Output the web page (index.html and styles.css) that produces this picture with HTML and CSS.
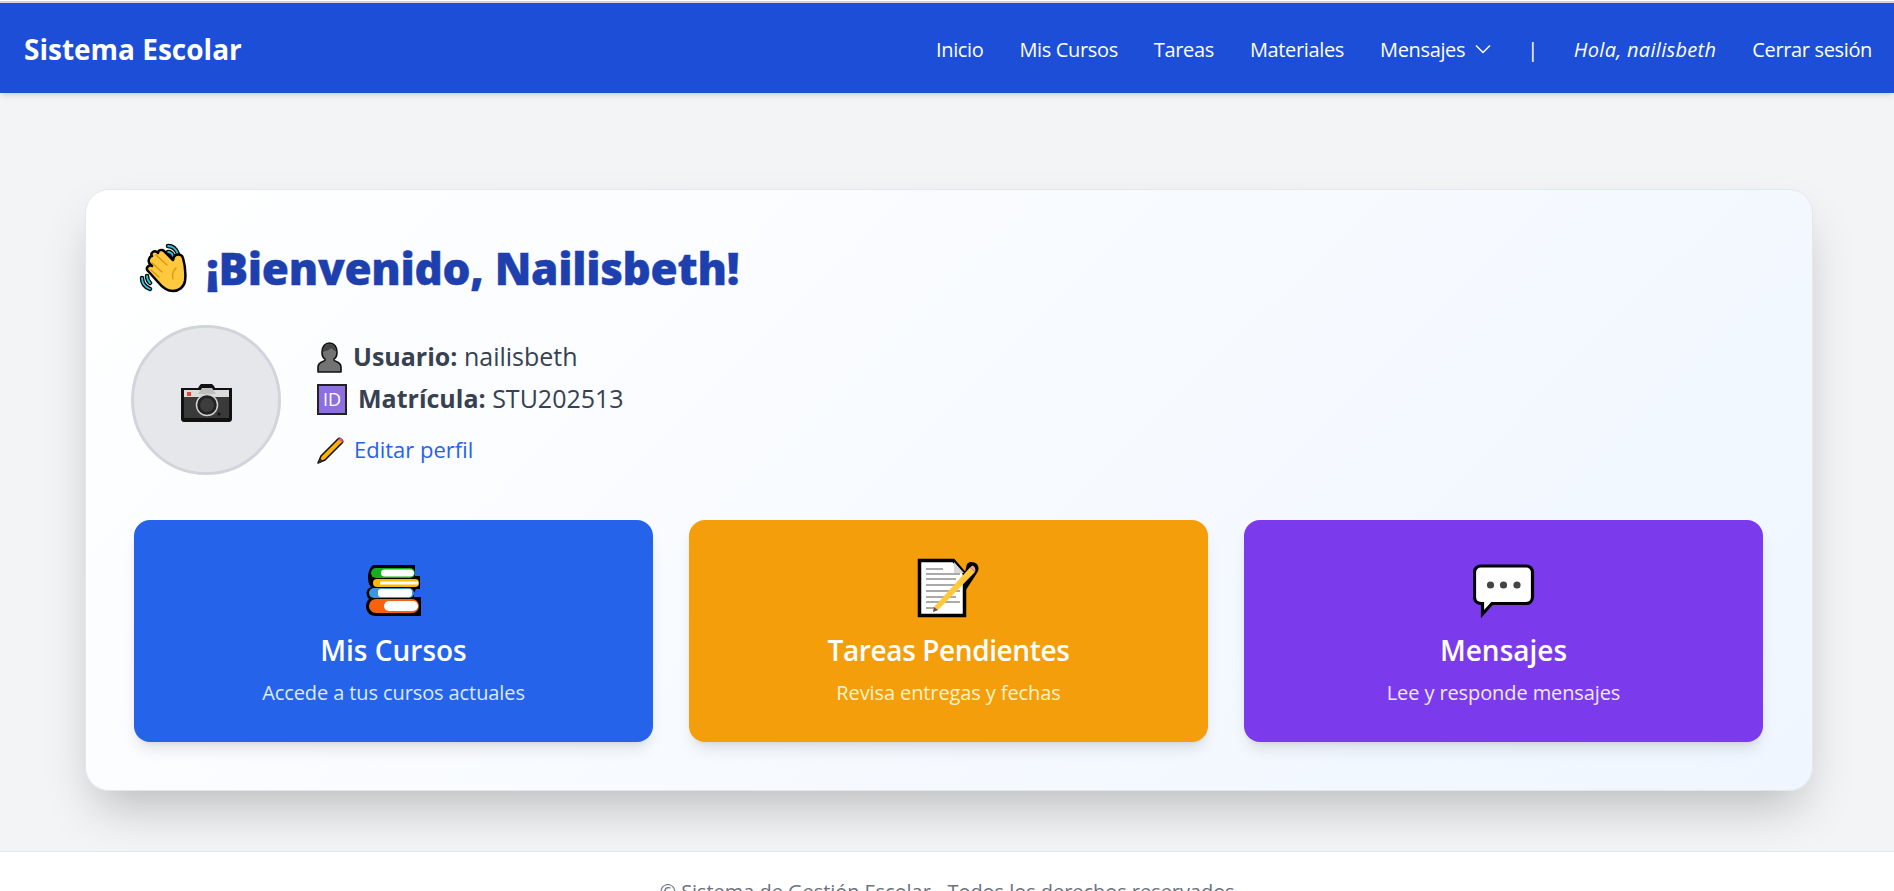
FILE: index.html
```html
<!DOCTYPE html>
<html lang="es">
<head>
    <meta charset="UTF-8">
    <meta name="viewport" content="width=device-width, initial-scale=1.0">
    <title>Sistema Escolar</title>
    <link rel="stylesheet" href="styles.css">
</head>
<body>
    <div class="topline"></div>
    <nav class="navbar">
        <a class="brand" href="#">Sistema Escolar</a>
        <div class="nav-links">
            <a href="#">Inicio</a>
            <a href="#">Mis Cursos</a>
            <a href="#">Tareas</a>
            <a href="#">Materiales</a>
            <a href="#" class="dropdown">Mensajes
                <svg class="chevron" viewBox="0 0 16 10"><path d="M1 1.500 8 8.500l7-7" fill="none" stroke="#fff" stroke-width="1.500"/></svg>
            </a>
            <span class="sep">|</span>
            <em>Hola, nailisbeth</em>
            <a href="#">Cerrar sesión</a>
        </div>
    </nav>

    <main class="main">
        <section class="card">
            <h1 class="welcome">
                <svg class="ico-wave" viewBox="0 0 48 50">
                    <path d="M29 3c5 0 8 3 10 8M29 9c2 0 4 1 5 4M3 35c0 5 3 9 8 11M8 33c0 3 1 5 3 7" fill="none" stroke="#000" stroke-width="4.500" stroke-linecap="round"/>
                    <path d="M29 3c5 0 8 3 10 8M29 9c2 0 4 1 5 4M3 35c0 5 3 9 8 11M8 33c0 3 1 5 3 7" fill="none" stroke="#29c3e0" stroke-width="1.800" stroke-linecap="round"/>
                    <path d="M13 13c-2-3 2-6 5-4l1 1c0-3 4-4 6-2l9 9 1-3c2-4 8-3 9 1 2 7 3 15 2 23-1 6-6 10-12 10-7 0-11-4-15-9L9 28c-3-3 1-7 4-5l-2-2c-3-3 0-8 2-8z" fill="#ffc83d" stroke="#000" stroke-width="2.500" stroke-linejoin="round"/>
                    <path d="M17 12l11 10M13 20l10 9M12 27l8 7M37 25c-3 3-4 7-3 11" fill="none" stroke="#d9950f" stroke-width="1.200" stroke-linecap="round"/>
                </svg>
                ¡Bienvenido, Nailisbeth!
            </h1>

            <div class="profile">
                <div class="avatar">
                    <svg class="ico-camera" viewBox="0 0 51 38">
                        <path d="M0 4h17l2-3 1-1h11l2 2 1 2h17v31c0 1-1 3-3 3H3c-2 0-3-2-3-3z" fill="#111"/>
                        <rect x="3" y="6" width="45" height="7" fill="#dcdcdc"/>
                        <path d="M3 13h45v21H3z" fill="#3a3a3a"/>
                        <rect x="6" y="8" width="4" height="4" fill="#e8452c"/>
                        <path d="M17 10l4-6h10l4 6z" fill="#bdbdbd"/>
                        <circle cx="26" cy="21" r="10.500" fill="#222" stroke="#d0d0d0" stroke-width="1.500"/>
                        <circle cx="26" cy="21" r="7" fill="#3d3d3d"/>
                        <circle cx="38" cy="30" r="1.500" fill="#111"/>
                    </svg>
                </div>
                <div class="profile-info">
                    <p class="info-line">
                        <svg class="ico-person" viewBox="0 0 25 31">
                            <path d="M1 30v-5c0-3 3-5 6-6 1 0 1-1 1-2-2-1-3-4-3-7 0-5 3-9 7.500-9S20 5 20 10c0 3-1 6-3 7 0 1 0 2 1 2 3 1 6 3 6 6v5z" fill="#737373" stroke="#111" stroke-width="1.600" stroke-linejoin="round"/>
                            <path d="M5.500 10c1-4 3-8 7-8s6 4 7 8c-2-1-4-3-5-4-2 2-6 3-9 4z" fill="#444"/>
                        </svg>
                        <span class="info-text"><b>Usuario:</b> nailisbeth</span>
                    </p>
                    <p class="info-line">
                        <span class="id-badge">ID</span>
                        <span class="info-text"><b>Matrícula:</b> STU202513</span>
                    </p>
                    <a class="edit-link" href="#">
                        <svg class="ico-pencil" viewBox="0 0 27 27">
                            <path d="M21 2 4 19l-3 7 7-3L25 6c1-1 1-2 0-3l-1-1c-1-1-2-1-3 0z" fill="#ffb300" stroke="#111" stroke-width="1.600" stroke-linejoin="round"/>
                            <path d="M21 2l4 4 1-2-2-3z" fill="#f0606f"/>
                            <path d="M1 26l2-5 3 3z" fill="#333"/>
                        </svg>
                        <span class="info-text">Editar perfil</span>
                    </a>
                </div>
            </div>

            <div class="tiles">
                <a class="tile tile-blue" href="#">
                    <svg class="ico-books" viewBox="0 0 55 52">
                        <path d="M8 1h41v11h5v13h-4l-2 4v4h7v19H10C4 52 0 48 0 42c0-3 1-5 3-7-3-3-3-8-1-10l3-2C3 21 2 18 2 13S5 1 8 1z" fill="#000"/>
                        <rect x="5" y="4" width="44" height="10" rx="5" fill="#16b01e"/>
                        <rect x="15" y="5.500" width="33" height="7" rx="3.500" fill="#fff"/>
                        <rect x="7" y="15" width="46" height="8" rx="4" fill="#ffb900"/>
                        <rect x="14" y="17.500" width="38" height="3" fill="#fff"/>
                        <rect x="3" y="24" width="45" height="10" rx="5" fill="#3b96dc"/>
                        <rect x="12" y="25" width="34" height="8" rx="3" fill="#fff"/>
                        <rect x="3" y="35" width="50" height="14" rx="7" fill="#f7630c"/>
                        <rect x="18" y="37" width="34" height="10" rx="5" fill="#fff"/>
                    </svg>
                    <h2>Mis Cursos</h2>
                    <p>Accede a tus cursos actuales</p>
                </a>
                <a class="tile tile-orange" href="#">
                    <svg class="ico-memo" viewBox="0 0 63 61">
                        <path d="M2.500 2.500h34l11 13v42h-45z" fill="#fff" stroke="#000" stroke-width="3.500"/>
                        <path d="M37 4v11h10z" fill="#d8d8d8"/>
                        <path d="M9 11h17M9 16h34M9 21h30M9 27h34M9 33h34M9 39h30M9 44h34M9 50h8" stroke="#aaa" stroke-width="1.800"/>
                        <path d="M50 6c3-3 7-2 10 0 2 3 2 6 0 9L47 35V18z" fill="#000"/>
                        <path d="M53 9.500 17 49l-1 5 5-2L58 14z" fill="#ffc83d"/>
                        <path d="M53 9.500c2-2 3-2 4-1s2 3 1 5.500z" fill="#eda0a8"/>
                        <path d="M16 54l1-5 4 3z" fill="#555"/>
                    </svg>
                    <h2>Tareas Pendientes</h2>
                    <p>Revisa entregas y fechas</p>
                </a>
                <a class="tile tile-purple" href="#">
                    <svg class="ico-bubble" viewBox="0 0 62 55">
                        <path d="M8 2h45c4 0 6.500 3 6.500 6v25c0 4-3 6.500-6.500 6.500H19L9.500 50V39.500H8c-4 0-6.500-3-6.500-6.500V8C1.500 5 4 2 8 2z" fill="#fff" stroke="#000" stroke-width="3.200"/>
                        <circle cx="17.500" cy="21" r="3.600" fill="#444"/>
                        <circle cx="30.500" cy="21" r="3.600" fill="#444"/>
                        <circle cx="44" cy="21" r="3.600" fill="#444"/>
                    </svg>
                    <h2>Mensajes</h2>
                    <p>Lee y responde mensajes</p>
                </a>
            </div>
        </section>
    </main>

    <footer class="footer">© Sistema de Gestión Escolar - Todos los derechos reservados</footer>
</body>
</html>
```

FILE: styles.css
```css
html {
    background: white;
    height: 891px;
    overflow: hidden;
}
body {
    margin: 1px 0 0;
    font-family: "Open Sans", "Noto Sans", sans-serif;
    background-color: #f3f4f6;
    color: #374151;
}
a { text-decoration: none; color: inherit; }

.topline { height: 2px; background: #d4d4d4; }

.navbar {
    height: 90px;
    box-sizing: border-box;
    padding: 2px 22px 0 24px;
    background: #1d4ed8;
    color: white;
    display: flex;
    align-items: center;
    justify-content: space-between;
    box-shadow: 0 4px 6px -1px rgba(0,0,0,0.1), 0 2px 4px -2px rgba(0,0,0,0.1);
    font-size: 20px;
}
.brand { font-size: 28px; font-weight: 700; }
.nav-links { display: flex; align-items: center; gap: 36px; letter-spacing: -0.35px; }
.nav-links em { letter-spacing: 0.3px; }
.dropdown { display: flex; align-items: center; gap: 10px; }
.chevron { width: 16px; height: 10px; }

.main { padding: 96px 0 60px 85px; }
.card {
    width: 1728px;
    box-sizing: border-box;
    border: 1px solid #e5e7eb;
    border-radius: 24px;
    padding: 48px;
    background: linear-gradient(135deg, #ffffff, #eff6ff);
    box-shadow: 0 25px 50px -12px rgba(0,0,0,0.25);
}
.welcome {
    margin: 0 0 27px 5px;
    display: flex;
    align-items: center;
    gap: 19px;
    font-size: 44px;
    font-weight: 800;
    letter-spacing: -0.3px;
    -webkit-text-stroke: 0.4px #1e40af;
    color: #1e40af;
    line-height: 60px;
}
.ico-wave { width: 48px; height: 50px; }

.profile { display: flex; align-items: center; gap: 36px; margin-left: -3px; }
.avatar {
    width: 150px;
    height: 150px;
    box-sizing: border-box;
    border-radius: 50%;
    border: 3px solid #d1d5db;
    background: #e5e7eb;
    display: flex;
    align-items: center;
    justify-content: center;
}
.ico-camera { width: 51px; height: 38px; margin-top: 6px; }
.info-line {
    margin: 0;
    display: flex;
    align-items: center;
    gap: 11px;
    font-size: 25px;
    height: 42px;
}
.info-line b { font-weight: 700; }
.info-text { margin-bottom: 2px; }
.ico-person { width: 25px; height: 31px; }
.id-badge {
    width: 30px;
    height: 31px;
    box-sizing: border-box;
    border: 2px solid #222;
    background: #8e6fe0;
    color: white;
    font-size: 18px;
    display: flex;
    align-items: center;
    justify-content: center;
}
.edit-link {
    display: flex;
    align-items: center;
    gap: 10px;
    margin-top: 16px;
    height: 28px;
    font-size: 22px;
    color: #2563eb;
}
.ico-pencil { width: 27px; height: 27px; }

.tiles {
    display: grid;
    grid-template-columns: repeat(3, 1fr);
    gap: 36px;
    margin-top: 45px;
    padding-right: 1px;
}
.tile {
    height: 222px;
    border-radius: 16px;
    color: white;
    display: flex;
    flex-direction: column;
    align-items: center;
    box-shadow: 0 10px 15px -3px rgba(0,0,0,0.1), 0 4px 6px -4px rgba(0,0,0,0.1);
}
.tile svg { margin-top: 44px; }
.tile h2 { margin: 15px 0 0; font-size: 28px; font-weight: 600; line-height: 38px; }
.tile p { margin: 11px 0 0; font-size: 20px; letter-spacing: -0.1px; line-height: 26px; }
.tile-blue { background: #2563eb; }
.tile-blue p { color: #dbeafe; }
.tile-orange { background: #f59e0b; }
.tile-orange h2 { letter-spacing: -0.4px; }
.tile-orange p { color: #fef3c7; }
.tile-purple { background: #7c3aed; }
.tile-purple p { color: #ede9fe; }
.ico-books { width: 55px; height: 52px; }
.tile .ico-memo { width: 63px; height: 61px; margin-top: 38px; margin-bottom: -3px; }
.tile .ico-bubble { width: 62px; height: 55px; margin-bottom: -3px; }

.footer {
    border-top: 1px solid #e5e7eb;
    background: white;
    text-align: center;
    font-size: 20px;
    letter-spacing: -0.05px;
    color: #6b7280;
    padding: 26px 0;
}
```
